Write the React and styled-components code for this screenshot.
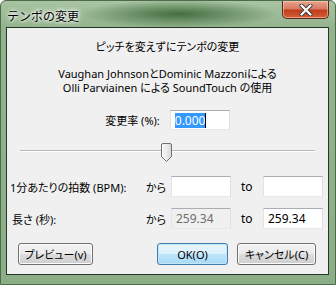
import React from 'react';
import styled, { createGlobalStyle } from 'styled-components';

const Global = createGlobalStyle`
  html, body { margin: 0; padding: 0; background: #ffffff; }
  body {
    font-family: "Noto Sans", "Noto Sans CJK JP", sans-serif;
    font-size: 11px;
    font-feature-settings: "palt";
    color: #000;
  }
`;

const Window = styled.div`
  width: 336px;
  height: 285px;
  box-sizing: border-box;
  display: flex;
  flex-direction: column;
  border: 1px solid #4d6a4a;
  border-radius: 6px 6px 0 0;
  padding: 0 6px 9px 5px;
  background:
    radial-gradient(ellipse 100px 14px at 178px 13px, rgba(62, 105, 60, 0.95), rgba(62, 105, 60, 0)),
    linear-gradient(to bottom, #a8c4a2 0, #93b38d 26px, #8cae87 100%);
`;

const TitleBar = styled.div`
  height: 26px;
  display: flex;
  align-items: flex-start;
  justify-content: space-between;
`;

const Title = styled.div`
  font-family: "Noto Sans CJK JP", sans-serif;
  font-size: 12px;
  font-feature-settings: normal;
  line-height: 14px;
  margin: 8px 0 0 1px;
  color: #000;
  text-shadow: 0 0 6px #fff, 0 0 4px #fff, 0 0 2px #fff;
`;

const CloseButton = styled.div`
  width: 47px;
  height: 18px;
  box-sizing: border-box;
  border: 1px solid #5a2a20;
  border-top: none;
  border-radius: 0 0 5px 5px;
  background: linear-gradient(to bottom, #e9a38e 0, #d87b62 45%, #c23d1a 55%, #d2603a 100%);
  box-shadow: inset 0 0 0 1px rgba(255, 220, 200, 0.5);
  display: flex;
  align-items: center;
  justify-content: center;
`;

const Client = styled.div`
  flex: 1;
  background: #f0f0f0;
  border: 1px solid #26362a;
  display: flex;
  flex-direction: column;
`;

const Heading = styled.div`
  margin-top: 12px;
  line-height: 14px;
  text-align: center;
`;

const Credits = styled.div`
  margin-top: 13px;
  line-height: 14px;
  text-align: center;
`;

const RateRow = styled.div`
  margin-top: 15px;
  height: 20px;
  display: flex;
  align-items: center;
  justify-content: center;
  gap: 10px;
`;

const TextBox = styled.div`
  width: 60px;
  height: ${p => p.$h || 21}px;
  box-sizing: border-box;
  border: 1px solid #abadb3;
  border-color: #abadb3 #dbdfe6 #e3e9ef #e2e3ea;
  background: ${p => (p.$disabled ? '#f0f0f0' : '#fff')};
  color: ${p => (p.$disabled ? '#6d6d6d' : '#000')};
  display: flex;
  align-items: center;
  padding-left: 4px;
  font-size: 12px;
`;

const Selected = styled.span`
  background: #3399ff;
  color: #fff;
  line-height: 15px;
`;

const Caret = styled.span`
  width: 1px;
  height: 15px;
  background: #000;
`;

const SliderArea = styled.div`
  margin: 10px 13px 0;
  height: 25px;
  position: relative;
`;

const Track = styled.div`
  position: absolute;
  left: 0;
  right: 0;
  top: 10px;
  height: 1px;
  background: #b8b8b8;
  border-bottom: 1px solid #fff;
`;

const Thumb = styled.svg`
  position: absolute;
  top: 3px;
`;

const FieldRow = styled.div`
  margin-top: 11px;
  display: grid;
  grid-template-columns: 1fr 25px 60px 32px 60px;
  align-items: center;
  padding: 0 5px 0 ${p => p.$pad || 3}px;
  height: 21px;
`;

const Label = styled.span`
  white-space: nowrap;
`;

const To = styled.span`
  padding-left: 10px;
  font-size: 12px;
`;

const ButtonRow = styled.div`
  margin-top: 14px;
  display: flex;
  padding: 0 12px 0 11px;
  gap: 9px;
`;

const Button = styled.div`
  width: ${p => p.$w}px;
  height: 22px;
  box-sizing: border-box;
  border: 1px solid ${p => (p.$default ? '#3c7fb1' : '#707070')};
  border-radius: 3px;
  background: ${p =>
    p.$default
      ? 'linear-gradient(to bottom, #eaf6fd 0, #d9f0fc 50%, #bee6fd 50%, #a7d9f5 100%)'
      : 'linear-gradient(to bottom, #f2f2f2 0, #ebebeb 50%, #dddddd 50%, #cfcfcf 100%)'};
  box-shadow: inset 0 0 0 1px ${p => (p.$default ? '#c4e5f6' : '#fcfcfc')};
  display: flex;
  align-items: center;
  justify-content: center;
  white-space: nowrap;
  margin-left: ${p => (p.$push ? 'auto' : '0')};
`;

function ThumbIcon({ left }) {
  return (
    <Thumb width="12" height="20" viewBox="0 0 12 20" style={{ left }}>
      <defs>
        <linearGradient id="tg" x1="0" y1="0" x2="1" y2="0">
          <stop offset="0" stopColor="#f6f6f6" />
          <stop offset="0.5" stopColor="#ececec" />
          <stop offset="1" stopColor="#d6d6d6" />
        </linearGradient>
      </defs>
      <path
        d="M0.5 2 Q0.5 0.5 2 0.5 H9 Q10.5 0.5 10.5 2 V13.5 L5.5 18.5 L0.5 13.5 Z"
        fill="url(#tg)"
        stroke="#707070"
      />
      <path d="M1.5 2 V13 L5.5 17" fill="none" stroke="#ffffff" strokeOpacity="0.8" />
    </Thumb>
  );
}

export default function App() {
  return (
    <>
      <Global />
      <Window>
        <TitleBar>
          <Title>テンポの変更</Title>
          <CloseButton>
            <svg width="14" height="12" viewBox="0 0 14 12">
              <path d="M2.5 1.5 L11.5 10.5 M11.5 1.5 L2.5 10.5" stroke="#3a3a3a" strokeWidth="4" strokeLinecap="round" />
              <path d="M2.5 1.5 L11.5 10.5 M11.5 1.5 L2.5 10.5" stroke="#ffffff" strokeWidth="2.2" strokeLinecap="round" />
            </svg>
          </CloseButton>
        </TitleBar>
        <Client>
          <Heading>ピッチを変えずにテンポの変更</Heading>
          <Credits>
            Vaughan JohnsonとDominic Mazzoniによる
            <br />
            Olli Parviainen による SoundTouch の使用
          </Credits>
          <RateRow>
            <Label>変更率 (%):</Label>
            <TextBox $h={20}>
              <Selected>0.000</Selected>
              <Caret />
            </TextBox>
          </RateRow>
          <SliderArea>
            <Track />
            <ThumbIcon left={141} />
          </SliderArea>
          <FieldRow $pad={3}>
            <Label>1分あたりの拍数 (BPM):</Label>
            <Label>から</Label>
            <TextBox />
            <To>to</To>
            <TextBox />
          </FieldRow>
          <FieldRow $pad={5}>
            <Label>長さ (秒):</Label>
            <Label>から</Label>
            <TextBox $disabled>259.34</TextBox>
            <To>to</To>
            <TextBox>259.34</TextBox>
          </FieldRow>
          <ButtonRow>
            <Button $w={75}>プレビュー(v)</Button>
            <Button $w={71} $default $push>OK(O)</Button>
            <Button $w={79}>キャンセル(C)</Button>
          </ButtonRow>
        </Client>
      </Window>
    </>
  );
}
